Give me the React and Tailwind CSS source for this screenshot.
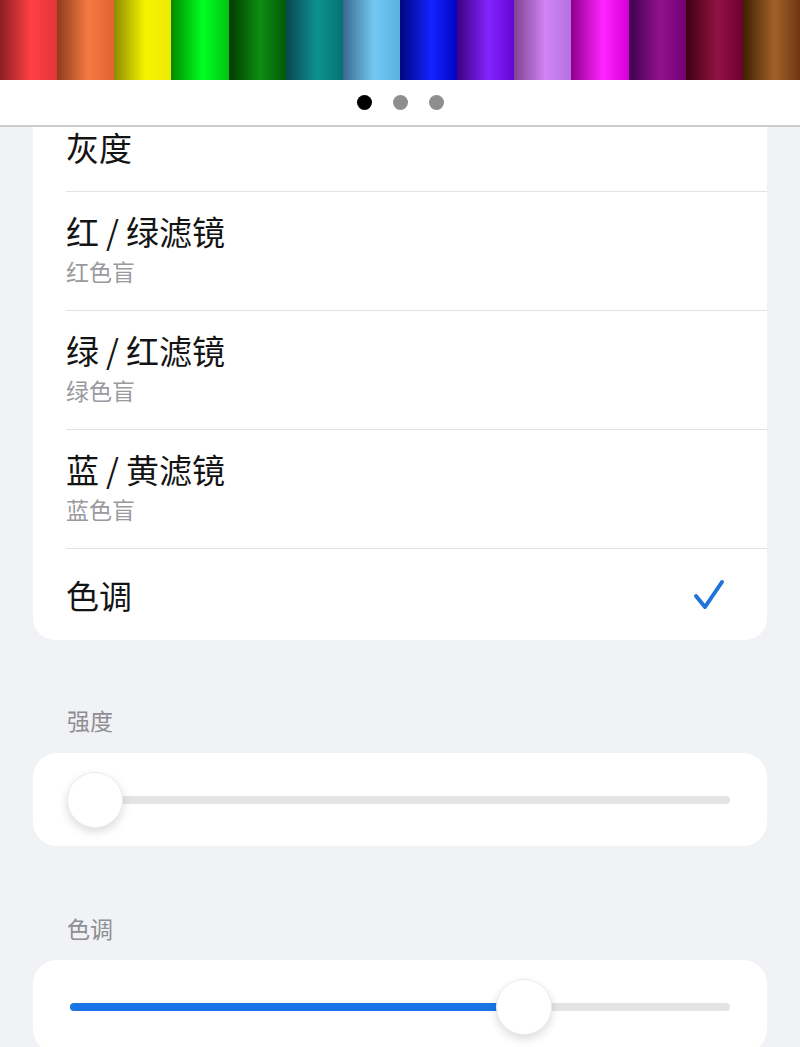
import React from "react";

const stripes = [
  "bg-[linear-gradient(90deg,#8a1e22,#ff4044_55%,#e2343a)]",
  "bg-[linear-gradient(90deg,#8e3c1e,#f57a42_55%,#e06432)]",
  "bg-[linear-gradient(90deg,#8c8a00,#f6f400_55%,#ecea00)]",
  "bg-[linear-gradient(90deg,#008a00,#00ff22_55%,#00c414)]",
  "bg-[linear-gradient(90deg,#003a00,#0e8e12_55%,#005a06)]",
  "bg-[linear-gradient(90deg,#0a4650,#0c9290_55%,#067272)]",
  "bg-[linear-gradient(90deg,#3c6890,#72caf2_55%,#5cb0e2)]",
  "bg-[linear-gradient(90deg,#00067e,#1424ff_55%,#0004c4)]",
  "bg-[linear-gradient(90deg,#3c0080,#8424ff_55%,#6406d2)]",
  "bg-[linear-gradient(90deg,#7e4292,#d284f4_55%,#b472e2)]",
  "bg-[linear-gradient(90deg,#8e008e,#ff24ff_55%,#d400d4)]",
  "bg-[linear-gradient(90deg,#3e004e,#92128e_55%,#720072)]",
  "bg-[linear-gradient(90deg,#3e0010,#921244_55%,#700032)]",
  "bg-[linear-gradient(90deg,#3e2000,#a2622a_55%,#703614)]",
];

const filters = [
  { a: "红", b: "绿滤镜", sub: "红色盲" },
  { a: "绿", b: "红滤镜", sub: "绿色盲" },
  { a: "蓝", b: "黄滤镜", sub: "蓝色盲" },
];

function Slider({ value, filled }) {
  // thumb is 56px, track spans the container
  const left = `calc((100% - 56px) * ${value})`;
  const fill = `calc((100% - 56px) * ${value} + 28px)`;
  return (
    <div className="bg-white rounded-[24px] h-[93px] px-[34px] flex items-center">
      <div className="relative w-full h-[56px] flex items-center">
        <div className="mx-[3px] w-full h-[8px] rounded-full bg-[#e4e4e7]" />
        {filled && (
          <div
            className="absolute left-[3px] top-[24px] h-[8px] rounded-full bg-[#1a74e6]"
            style={{ width: fill }}
          />
        )}
        <div
          className="absolute top-0 w-[56px] h-[56px] rounded-full bg-white border border-[#ececee] shadow-[0_4px_10px_rgba(0,0,0,0.14)]"
          style={{ left }}
        />
      </div>
    </div>
  );
}

export default function App() {
  return (
    <div
      className="h-[1047px] overflow-hidden bg-[#f1f2f6]"
      style={{ fontFamily: '"Noto Sans CJK SC", "Noto Sans", sans-serif' }}
    >
      <div className="flex h-[80px]">
        {stripes.map((s, i) => (
          <div key={i} className={`flex-1 ${s}`} />
        ))}
      </div>
      <div className="h-[45px] bg-white flex items-center justify-center gap-[21px]">
        <span className="w-[15px] h-[15px] rounded-full bg-black" />
        <span className="w-[15px] h-[15px] rounded-full bg-[#8e8e8e]" />
        <span className="w-[15px] h-[15px] rounded-full bg-[#8e8e8e]" />
      </div>
      <div className="h-[2px] bg-[#cdcdcf]" />

      <div className="px-[33px]">
        <div className="bg-white rounded-b-[22px] pl-[33px]">
          <div className="h-[65px] border-b border-[#e2e2e5]">
            <div className="text-[33px] leading-[40px] text-[#141414]">灰度</div>
          </div>
          {filters.map((f) => (
            <div key={f.a + f.b} className="pt-[19px] pb-[24px] border-b border-[#e2e2e5]">
              <div className="text-[33px] leading-[40px] text-[#141414]">
                {f.a}
                <span className="px-[7px]">/</span>
                {f.b}
              </div>
              <div className="mt-[5px] text-[23px] leading-[30px] text-[#9a9a9e]">{f.sub}</div>
            </div>
          ))}
          <div className="pt-[26px] pb-[25px] pr-[42px] flex items-center justify-between">
            <div className="text-[33px] leading-[40px] text-[#141414]">色调</div>
            <svg width="32" height="32" viewBox="0 0 32 32" fill="none">
              <path
                d="M3 17 L12 28 L29 3"
                stroke="#1f74d8"
                strokeWidth="4"
                strokeLinecap="round"
                strokeLinejoin="round"
              />
            </svg>
          </div>
        </div>

        <div className="mt-[65px] pl-[34px] text-[23px] leading-[30px] text-[#8e8e92]">强度</div>
        <div className="mt-[18px]">
          <Slider value={0} />
        </div>

        <div className="mt-[67px] pl-[34px] text-[23px] leading-[30px] text-[#8e8e92]">色调</div>
        <div className="mt-[17px]">
          <Slider value={0.703} filled />
        </div>
      </div>
    </div>
  );
}
